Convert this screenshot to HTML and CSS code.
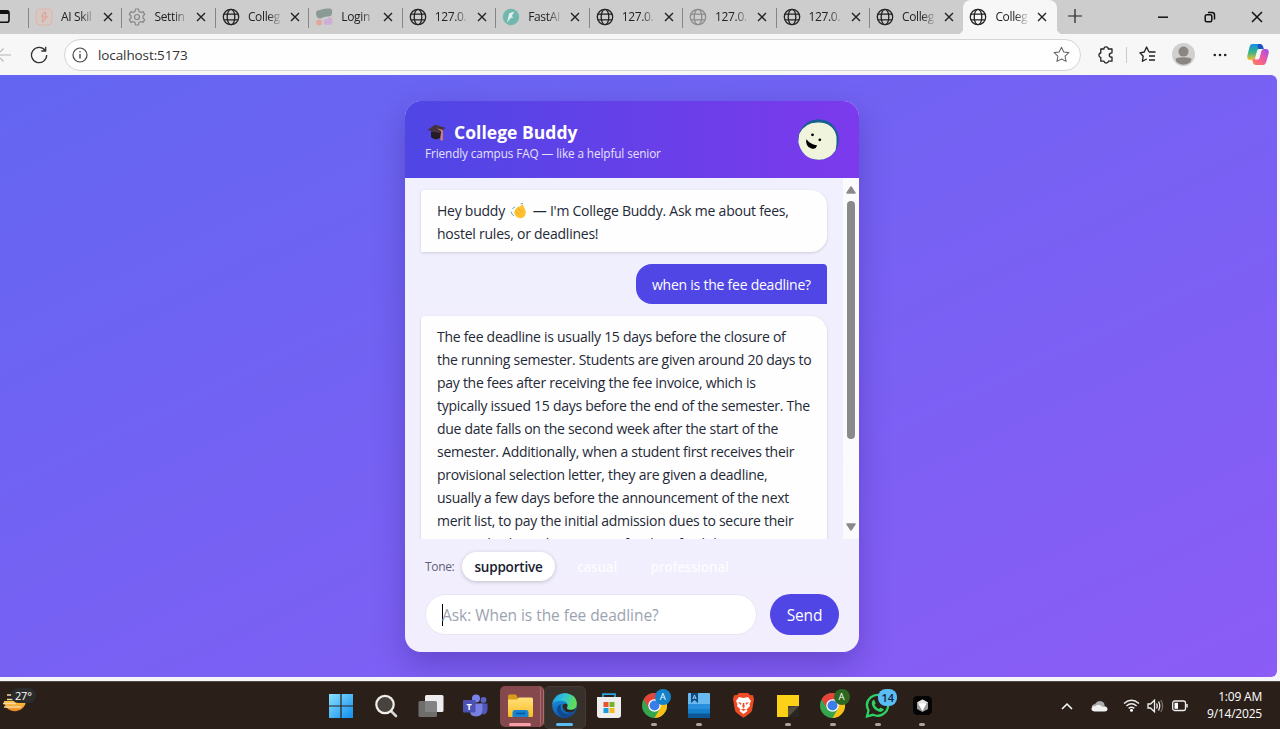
FILE: index.html
```
<!DOCTYPE html>
<html lang="en">
<head>
<meta charset="utf-8">
<title>College Buddy</title>
<link rel="stylesheet" href="styles.css">
</head>
<body>
<svg class="defs" width="0" height="0">
  <defs>
    <linearGradient id="win" x1="0" y1="0" x2="1" y2="1"><stop offset="0" stop-color="#8be1fc"/><stop offset="1" stop-color="#0f8df0"/></linearGradient>
    <linearGradient id="folder" x1="0" y1="0" x2="0" y2="1"><stop offset="0" stop-color="#ffe07a"/><stop offset="1" stop-color="#f9bd25"/></linearGradient>
    <linearGradient id="edgeA" x1="0" y1="0" x2="1" y2="0.3"><stop offset="0" stop-color="#1c9ae0"/><stop offset=".5" stop-color="#2fc3d8"/><stop offset="1" stop-color="#5fdc58"/></linearGradient>
    <linearGradient id="edgeB" x1="0" y1="0" x2="0" y2="1"><stop offset="0" stop-color="#1b9de4"/><stop offset="1" stop-color="#0f58b0"/></linearGradient>
    <linearGradient id="cpA" x1="0" y1="0" x2="0" y2="1"><stop offset="0" stop-color="#178de8"/><stop offset=".5" stop-color="#32b58b"/><stop offset="1" stop-color="#f4c02c"/></linearGradient>
    <linearGradient id="cpB" x1="1" y1="0" x2="0" y2="1"><stop offset="0" stop-color="#a04df0"/><stop offset=".5" stop-color="#ee5aa0"/><stop offset="1" stop-color="#ff8050"/></linearGradient>
    <linearGradient id="sun" x1="0" y1="0" x2="0" y2="1"><stop offset="0" stop-color="#ffc63b"/><stop offset="1" stop-color="#ee8524"/></linearGradient>
    <symbol id="globe" viewBox="0 0 18 18"><g fill="none" stroke="currentColor" stroke-width="1.3"><circle cx="9" cy="9" r="7.7"/><ellipse cx="9" cy="9" rx="3.8" ry="7.7"/><path d="M2 6.2h14M2 11.8h14"/></g></symbol>
    <symbol id="close" viewBox="0 0 10 10"><path d="M1 1l8 8M9 1L1 9" stroke="currentColor" stroke-width="1.4"/></symbol>
    <symbol id="chrome" viewBox="0 0 24 24">
      <circle cx="12" cy="12" r="12" fill="#35a64d"/>
      <path d="M1.6 6A12 12 0 0 1 22.4 6H12L7 15z" fill="#e6443a"/>
      <path d="M22.4 6A12 12 0 0 1 12 24l5.2-9L12 6z" fill="#fbc116"/>
      <circle cx="12" cy="12" r="6" fill="#fff"/><circle cx="12" cy="12" r="4.8" fill="#3b7de9"/>
    </symbol>
  </defs>
</svg>

<div class="tabs">
  <div class="lead"><svg width="10" height="15" viewBox="0 0 10 15"><path d="M-4 1.7H7Q9 1.7 9 4V11Q9 13.3 7 13.3H-4" fill="none" stroke="#111" stroke-width="1.6"/><path d="M-4 3.5H9" stroke="#111" stroke-width="3"/></svg></div>
  <div class="tab"><svg class="fav" viewBox="0 0 18 18"><rect x="1" y="1" width="16" height="16" rx="4" fill="#d6c9c5" stroke="#dfb5a8"/><path d="M10.500 3.500L6.500 8 9 9.500 12 8.500 7.500 14.500M10.500 3.500V8.500M7.500 9v5.500" fill="none" stroke="#e2a596" stroke-width="1.200"/></svg><span class="name">AI Skil</span><svg class="x"><use href="#close"/></svg></div>
  <div class="tab"><svg class="fav" viewBox="0 0 18 18" fill="none" stroke="#858585" stroke-width="1.2" stroke-linejoin="round"><path d="M7.500 1h3l.5 2.500 1.800 1L15 3.600l1.700 2.800L15 8v2l1.700 1.600-1.700 2.800-2.200-.9-1.800 1-.5 2.500h-3L7 14.500l-1.800-1-2.200.9-1.700-2.800L3 10V8L1.300 6.400 3 3.600l2.200.9 1.800-1z"/><circle cx="9" cy="9" r="2.500"/></svg><span class="name">Settin</span><svg class="x"><use href="#close"/></svg></div>
  <div class="tab"><svg class="fav"><use href="#globe"/></svg><span class="name">Colleg</span><svg class="x"><use href="#close"/></svg></div>
  <div class="tab"><svg class="fav" viewBox="0 0 18 18"><path d="M1 5Q1 2 5 2Q8 0 15 .5Q18 1 17 5Q17 9 12 8.500Q8 9 6 10.500Q1 11 1 5z" fill="#8c9a95"/><circle cx="4" cy="14.500" r="2.900" fill="#e3a79b"/><path d="M8.500 14Q8.500 11 12 11Q13 9.500 15.500 9.500Q17.500 10 17.500 13.500Q17.500 17 13 17Q8.500 17.500 8.500 14z" fill="#cfaed6"/></svg><span class="name">Login</span><svg class="x"><use href="#close"/></svg></div>
  <div class="tab"><svg class="fav"><use href="#globe"/></svg><span class="name">127.0.</span><svg class="x"><use href="#close"/></svg></div>
  <div class="tab"><svg class="fav" viewBox="0 0 18 18"><circle cx="9" cy="9" r="8.200" fill="#70b8ad"/><path d="M12.500 3.500L7.300 5.300 5 14.500l4-4.700h2.500L9.700 8z" fill="#e4eeee"/></svg><span class="name">FastAI</span><svg class="x"><use href="#close"/></svg></div>
  <div class="tab"><svg class="fav"><use href="#globe"/></svg><span class="name">127.0.</span><svg class="x"><use href="#close"/></svg></div>
  <div class="tab"><svg class="fav faded"><use href="#globe"/></svg><span class="name">127.0.</span><svg class="x"><use href="#close"/></svg></div>
  <div class="tab"><svg class="fav"><use href="#globe"/></svg><span class="name">127.0.</span><svg class="x"><use href="#close"/></svg></div>
  <div class="tab"><svg class="fav"><use href="#globe"/></svg><span class="name">Colleg</span><svg class="x"><use href="#close"/></svg></div>
  <div class="tab active"><svg class="fav"><use href="#globe"/></svg><span class="name">Colleg</span><svg class="x"><use href="#close"/></svg></div>
  <svg class="plus" width="14" height="14" viewBox="0 0 14 14"><path d="M7 0v14M0 7h14" stroke="#222" stroke-width="1.200"/></svg>
  <div class="wincontrols">
    <svg width="12" height="12" viewBox="0 0 12 12"><path d="M1 6.200h10" stroke="#111" stroke-width="1.500"/></svg>
    <svg width="12" height="12" viewBox="0 0 12 12" fill="none" stroke="#111" stroke-width="1.500"><rect x="1.200" y="3.800" width="6.600" height="7" rx="1.500"/><path d="M4 1.500H8Q10.500 1.500 10.500 4V8.500"/></svg>
    <svg width="12" height="12" viewBox="0 0 12 12"><path d="M1 1l10 10M11 1L1 11" stroke="#111" stroke-width="1.500"/></svg>
  </div>
</div>

<div class="toolbar">
  <svg class="back" width="12" height="16" viewBox="0 0 12 16"><path d="M-4 8H11M3.500 1.500L-3 8l6.500 6.500" fill="none" stroke="#b5b5b5" stroke-width="1.200"/></svg>
  <svg class="reload" width="18" height="18" viewBox="0 0 18 18"><path d="M15.200 4.500A7.600 7.600 0 1 0 16.700 9M15.700.8V5H11.300" fill="none" stroke="#333" stroke-width="1.300"/></svg>
  <div class="address">
    <svg width="16" height="16" viewBox="0 0 16 16"><circle cx="8" cy="8" r="7" fill="none" stroke="#444" stroke-width="1.200"/><path d="M8 7v4.500M8 4.200v1.300" stroke="#333" stroke-width="1.300"/></svg>
    <span class="url">localhost:5173</span>
    <svg width="17" height="17" viewBox="0 0 18 18"><path d="M9 1.300l2.400 5 5.400.7-4 3.800 1 5.500L9 13.700l-4.800 2.600 1-5.500-4-3.800 5.400-.7z" fill="none" stroke="#666" stroke-width="1.100" stroke-linejoin="round"/></svg>
  </div>
  <div class="tools">
    <svg width="16" height="18" viewBox="0 0 16 18"><path d="M2.800 3H6Q5.800.9 8 .9T10.200 3H14V6.800Q11.300 6.800 11.300 9T14 11.200V15.200H10.400Q10.200 17 8.200 17T6 15.200H2.800V11.500Q.9 11.200.9 9.200T2.800 7z" fill="none" stroke="#222" stroke-width="1.300" stroke-linejoin="round"/></svg>
    <i class="rule"></i>
    <svg width="18" height="17" viewBox="0 0 18 17"><path d="M10 6L7.600 1 5.300 6 .9 6.800 4.200 10.200 3.400 15.300 7.700 13M10 6h6.500M10 10h6M10 14h6" fill="none" stroke="#222" stroke-width="1.300" stroke-linejoin="round"/></svg>
    <svg width="23" height="23" viewBox="0 0 23 23"><circle cx="11.500" cy="11.500" r="11.500" fill="#d2d0ce"/><circle cx="11.500" cy="8.600" r="5" fill="#8a8684"/><path d="M3.500 15.500Q11.500 13 19.500 15.500Q19.500 21 11.500 21.800Q3.500 21 3.500 15.500z" fill="#8a8684"/></svg>
    <svg width="14" height="4" viewBox="0 0 14 4"><g fill="#222"><circle cx="1.800" cy="2" r="1.300"/><circle cx="7" cy="2" r="1.300"/><circle cx="12.200" cy="2" r="1.300"/></g></svg>
    <svg width="22" height="21" viewBox="0 0 22 21"><path d="M5 0H13Q15.300 0 16 2.500L16.600 5H12Q10.500 5 10 7L8.300 13Q7.500 16 5 16H3Q-.5 16 .5 11L2.500 3Q3.200 0 5 0z" fill="url(#cpA)"/><path d="M11 0H13Q15.300 0 16 2.500L16.600 5H12Q10 4.500 11 0z" fill="#1c51c9"/><path d="M16.800 5H19Q22.500 5 21.500 10L19.500 17Q18.500 21 16 21H9Q6.500 21 5.800 18L5.300 16Q7.700 15.500 8.300 13L8 15.500H11Q12.200 15.500 12.700 13.500L14.200 7.500Q14.800 5 16.800 5z" fill="url(#cpB)"/></svg>
  </div>
</div>

<main class="viewport">
  <section class="card">
    <header class="head">
      <div>
        <h1><svg width="19" height="17" viewBox="0 0 19 17"><path d="M4 7.500v5.500q4 4 9 1l1-6z" fill="#241c25"/><path d="M.5 6L8 .8 18.500 3.800 12.500 9.300z" fill="#45333f"/><path d="M10 4.200L15.800 6V16.500L13.300 16.200 14.300 7.200z" fill="#e08264"/></svg>College Buddy</h1>
        <p>Friendly campus FAQ — like a helpful senior</p>
      </div>
      <svg class="avatar" width="41" height="41" viewBox="0 0 41 41"><circle cx="20.500" cy="20.500" r="20.300" fill="#175e92"/><path d="M1.200 15Q7 3 20.500 3.500Q36 4 38.500 18Q39 26 37.500 31.500Q31 41 20.500 40.800Q4 40 .3 23z" fill="#f0f4dd"/><circle cx="14.500" cy="15.800" r="1.400"/><circle cx="21.800" cy="20.800" r="1.400"/><path d="M8.300 20.200Q13 25.800 19 26.300Q18 31 13.300 29.500Q7 27 8.300 20.200z"/></svg>
    </header>
    <div class="chat">
      <div class="messages">
        <div class="bubble bot hello">Hey buddy <svg class="wave" width="17" height="16" viewBox="0 0 17 16"><path d="M4.500 7.500L7.500 4 10 3.500 12.500 1 14 4.500 15.800 8Q16 15 10.500 15.200Q7 15 4.500 11.500z" fill="#ffc12f"/><path d="M5.500 8l3.500 3.500M8 5.500l3.500 3.500" stroke="#e79b22" stroke-width=".8"/><path d="M1 8.500q.5 3 3 4.500M2.500 6Q3 4.500 5 4M10.500 1q1-.8 2.500-.3" fill="none" stroke="#68a9c2" stroke-width="1"/></svg> — I'm College Buddy. Ask me about fees,<br>hostel rules, or deadlines!</div>
        <div class="bubble user">when is the fee deadline?</div>
        <div class="bubble bot">The fee deadline is usually 15 days before the closure of<br>the running semester. Students are given around 20 days to<br>pay the fees after receiving the fee invoice, which is<br>typically issued 15 days before the end of the semester. The<br>due date falls on the second week after the start of the<br>semester. Additionally, when a student first receives their<br>provisional selection letter, they are given a deadline,<br>usually a few days before the announcement of the next<br>merit list, to pay the initial admission dues to secure their<br>seat and submit the payment for their final dues.</div>
      </div>
      <div class="scroll"><svg width="10" height="8" viewBox="0 0 10 8"><path d="M5 1L9 7H1z" fill="#8a8a8a" stroke="#8a8a8a" stroke-width="1.500" stroke-linejoin="round"/></svg><i></i><svg class="down" width="10" height="8" viewBox="0 0 10 8"><path d="M5 7L9 1H1z" fill="#8a8a8a" stroke="#8a8a8a" stroke-width="1.500" stroke-linejoin="round"/></svg></div>
    </div>
    <div class="tone"><span class="label">Tone:</span><button class="pill on">supportive</button><button class="pill casual">casual</button><button class="pill pro">professional</button></div>
    <div class="ask"><div class="field"><i class="caret"></i><span>Ask: When is the fee deadline?</span></div><button class="send">Send</button></div>
  </section>
</main>

<footer class="taskbar">
  <div class="weather"><svg width="30" height="30" viewBox="0 0 30 30"><path d="M4 13H26A11.200 11.200 0 0 1 4 15z" fill="url(#sun)"/><path d="M7 7h5M7 11.500h9M3 15.500h13M4 19h17" stroke="#f3d9a4" stroke-width="1.700"/></svg><span>27°</span></div>
  <div class="apps">
    <div class="app"><svg width="24" height="24" viewBox="0 0 24 24"><path d="M0 0h11.400v11.400H0zM12.600 0H24v11.400H12.600zM0 12.600h11.400V24H0zM12.600 12.600H24V24H12.600z" fill="url(#win)"/></svg></div>
    <div class="app"><svg width="24" height="24" viewBox="0 0 24 24"><path d="M17 17l5 5" stroke="#d5d5d5" stroke-width="2.600" stroke-linecap="round"/><circle cx="11" cy="10.500" r="8.700" fill="#49433d" stroke="#eeeeec" stroke-width="2.200"/></svg></div>
    <div class="app"><svg width="26" height="24" viewBox="0 0 26 24"><rect x="7" y="1" width="18.500" height="17" rx="1.500" fill="#ededed"/><rect x=".5" y="7" width="18.500" height="16" rx="1.500" fill="#777" opacity=".9"/></svg></div>
    <div class="app"><svg width="25" height="24" viewBox="0 0 25 24"><circle cx="20.500" cy="6" r="2.900" fill="#5b62c5"/><path d="M17 9.500h7.500V16q-.5 4.500-5 4.500z" fill="#5057b8"/><circle cx="13" cy="4.500" r="4" fill="#7a83eb"/><path d="M7 9.500h12.500V16q0 6.500-6.500 6.500T7 16z" fill="#7880e2"/><rect y="6" width="12.500" height="12.500" rx="1" fill="#4b52b3"/><text x="6.200" y="15.500" text-anchor="middle" class="tlogo">T</text></svg></div>
    <div class="app files"><svg width="25" height="23" viewBox="0 0 25 23"><path d="M0 2Q0 .5 1.500.5H8l2 3.500H24v8H0z" fill="#d99b1a"/><path d="M0 5.500H9L11 3.500H23.500Q25 3.500 25 5V21.500Q25 23 23.500 23H1.500Q0 23 0 21.500z" fill="url(#folder)"/><path d="M4.500 23V18.500Q4.500 16 7 16H18Q20.500 16 20.500 18.500V23z" fill="#1784d3"/><path d="M8 19.500h9" stroke="#0c5696" stroke-width="1.600"/></svg></div>
    <div class="app edge"><svg width="25" height="25" viewBox="0 0 25 25"><circle cx="12.500" cy="12.500" r="12.300" fill="url(#edgeB)"/><path d="M.4 11Q2 1 12.500.2Q24.800 1 24.800 11Q24.500 16.800 18.500 16.800Q14 16.500 15 14.500Q17 9 11 8Q4 7 .4 11z" fill="url(#edgeA)"/><path d="M9 11Q7 18 13 20.500Q18 22 23.500 18Q19 24.700 12.500 24.800Q5 23 5 16Q5.500 12 9 11z" fill="#114a8c"/><path d="M10.500 12Q12 10 15 11Q16.300 13 14.800 15Q15.500 17 19 17Q22 17 24 15.300Q23 19 18 19.600Q10 19 10.500 12z" fill="#2c2722"/></svg></div>
    <div class="app"><svg width="24" height="25" viewBox="0 0 24 25"><path d="M6 5V1.200H18V5" fill="none" stroke="#2ba7e0" stroke-width="1.700"/><path d="M0 4H24V22Q24 25 21 25H3Q0 25 0 22z" fill="#eee"/><path d="M6.500 9h5v5h-5z" fill="#e9532c"/><path d="M12.500 9h5v5h-5z" fill="#77b32a"/><path d="M6.500 15h5v5h-5z" fill="#1c9ae0"/><path d="M12.500 15h5v5h-5z" fill="#fab71b"/></svg></div>
    <div class="app open"><svg width="25" height="25"><use href="#chrome"/></svg><b class="badge blue">A</b></div>
    <div class="app open"><svg width="22" height="25" viewBox="0 0 22 25"><rect width="22" height="25" rx="1.500" fill="#1680ca"/><path d="M0 1Q0 0 1 0H21Q22 0 22 1V11H0z" fill="#69b9f1"/><path d="M0 11h22v5H0z" fill="#298fdd"/><path d="M0 20.500h22V25H0z" fill="#0c5899"/><path d="M3 0h7v10L6.500 7 3 10z" fill="#0e4c80"/><path d="M4.800 6L6.500 2 8.200 6M5.300 5h2.400" fill="none" stroke="#bfe2fa" stroke-width=".8"/></svg></div>
    <div class="app"><svg width="21" height="25" viewBox="0 0 21 25"><path d="M6 0h9l2 2 3 .3L21 6 19 17.500Q18 20 10.500 24.800Q3 20 2 17.500L0 6 1 2.300 4 2z" fill="#f04a24"/><path d="M6 4l4.500 1L15 4l3 4-1.500 3 .5 2-3.500 3.500 1 1.500L10.500 21 6.500 18l1-1.500L4 13l.5-2L3 8z" fill="#fff"/><path d="M5 9l3.500 1-1 2zM16 9l-3.500 1 1 2zM9.800 10h1.400l.5 4-1.200 1-1.200-1zM8 16.500l2.500-1 2.500 1-2.500 1.500z" fill="#f04a24"/></svg></div>
    <div class="app open"><svg width="22" height="22" viewBox="0 0 22 22"><path d="M0 0H22V11L11 22H0z" fill="#fcd116"/><path d="M11 11H22V22H11z" fill="#3f3b31"/><path d="M11 22L22 11V22z" fill="#292723"/><path d="M11 22V13Q14 12 22 11z" fill="#55503c"/></svg></div>
    <div class="app open"><svg width="25" height="25"><use href="#chrome"/></svg><b class="badge green">A</b></div>
    <div class="app open"><svg width="25" height="25" viewBox="0 0 25 25"><path d="M2 23.300L3.500 17.500Q-.5 10 5.500 4.500Q12 -.5 19 4Q26 10 21.500 18Q15.500 25 8 21.800z" fill="none" stroke="#2bd366" stroke-width="2.300"/><path d="M9 6.500l1.700 3.800L9.500 12Q11.500 15 14 16l1.700-1.500L19 16.500Q17 20 13.500 18.500Q8.500 16.500 7 12Q6 8 9 6.500z" fill="#2bd366"/></svg><b class="badge count">14</b></div>
    <div class="app open"><svg width="19" height="19" viewBox="0 0 19 19"><rect width="19" height="19" rx="4.500" fill="#050505"/><path d="M9.500 3.500L15 6.500V13L9.500 16 4 13V6.500z" fill="#9b9b9b"/><path d="M4 6.500L9.500 3.500 15 6.500 9.500 9z" fill="#e4e4e4"/><path d="M5 7.500L13.500 7.500 9.500 15z" fill="#fff"/></svg></div>
  </div>
  <div class="tray">
    <svg width="12" height="8" viewBox="0 0 12 8"><path d="M1 7l5-5 5 5" fill="none" stroke="#fff" stroke-width="1.500"/></svg>
    <svg class="cloud" width="17" height="12" viewBox="0 0 17 12"><path d="M2 10Q-1 5 4 4Q7 -1 12 2Q14 4 13.500 6z" fill="#aaa"/><path d="M3.500 11.500Q0 11 .5 8Q2 5.500 4.500 6Q8 3.500 11 6.500Q16 5.500 16.500 9Q16.500 11.500 13.500 11.500z" fill="#f0f0f0"/></svg>
    <svg class="wifi" width="17" height="13" viewBox="0 0 17 13"><g fill="none" stroke="#eee" stroke-width="1.400"><path d="M1 4.500Q8.500 -2 16 4.500M3.400 7Q8.500 2.500 13.600 7M5.700 9.400Q8.500 7 11.300 9.400"/></g><circle cx="8.500" cy="11.300" r="1.500" fill="#fff"/></svg>
    <svg class="vol" width="17" height="14" viewBox="0 0 17 14"><g fill="none" stroke="#eee" stroke-width="1.300"><path d="M1 5H3.500L7.500 1.200V12.800L3.500 9H1zM9.500 4.500Q11 7 9.500 9.500M11.500 2.500Q14 7 11.500 11.500"/><path d="M13.800 1Q17.500 7 13.800 13" stroke="#776f68"/></g></svg>
    <svg class="bat" width="16" height="12" viewBox="0 0 16 12"><rect x=".7" y="1" width="12.800" height="9.500" rx="2" fill="none" stroke="#eee" stroke-width="1.300"/><path d="M2.500 2.800h3.500v6H2.500z" fill="#fff"/><path d="M15 4v3.500" stroke="#eee" stroke-width="1.500"/></svg>
    <div class="clock">1:09 AM<br>9/14/2025</div>
  </div>
</footer>
</body>
</html>
```
FILE: styles.css
```
* { box-sizing: border-box; }
body { margin: 0; width: 1280px; height: 729px; overflow: hidden; background: #f6f5f9; font-family: "Open Sans", "Noto Sans", sans-serif; display: flex; flex-direction: column; color: #222; }
svg { display: block; flex: none; }
.defs { position: absolute; }
button { border: 0; font: inherit; padding: 0; flex: none; }

.tabs { height: 34px; flex: none; background: #cdcdcd; display: flex; }
.lead { width: 29px; flex: none; padding-top: 9px; }
.tab { width: 93.450px; flex: none; height: 33px; display: flex; align-items: center; padding-left: 6px; position: relative; }
.tab::before { content: ""; position: absolute; left: -1px; top: 8px; width: 1px; height: 20px; background: #858585; }
.fav { width: 18px; height: 18px; color: #222; }
.fav.faded { color: #8b8b8b; }
.name { width: 36px; margin-left: 8px; white-space: nowrap; font-size: 12px; letter-spacing: -.35px; line-height: 17px; mask-image: linear-gradient(90deg, #000 55%, transparent 96%); }
.x { width: 10px; height: 10px; margin-left: 6px; color: #222; flex: none; }
.tab.active { background: #f7f7f7; height: 34px; border-radius: 8px 8px 0 0; padding-bottom: 1px; }
.tab.active::before { left: -6px; top: auto; bottom: 0; width: 6px; height: 6px; background: radial-gradient(circle at 0 0, transparent 6px, #f7f7f7 6.500px); }
.tab.active::after { content: ""; position: absolute; right: -6px; bottom: 0; width: 6px; height: 6px; background: radial-gradient(circle at 100% 0, transparent 6px, #f7f7f7 6.500px); }
.plus { margin: 9px 0 0 11px; }
.wincontrols { display: flex; gap: 35px; margin: 11px 17px 0 auto; }

.toolbar { height: 41px; flex: none; background: #f7f7f7; display: flex; align-items: center; }
.reload { margin-left: 18px; }
.address { width: 1017px; height: 32px; margin-left: 16px; border: 1px solid #d5d5d5; border-radius: 16px; background: #fefefe; display: flex; align-items: center; padding: 0 10px 0 7px; flex: none; }
.url { font-size: 13.500px; letter-spacing: -.1px; margin-left: 10px; flex: 1; color: #333; }
.tools { display: flex; align-items: center; flex: none; }
.tools svg:nth-of-type(1) { margin-left: 17px; }
.rule { width: 1px; height: 16px; background: #cacaca; margin: 0 12px; }
.tools svg:nth-of-type(3) { margin-left: 15px; }
.tools svg:nth-of-type(4) { margin-left: 18px; }
.tools svg:nth-of-type(5) { margin-left: 20px; }

.viewport { width: 1277px; height: 602px; flex: none; margin-bottom: 4px; padding: 26px 0 0 405px; background: linear-gradient(to bottom right, #6366f1, #8b5cf6); border-radius: 0 6px 6px 0; overflow: hidden; }
.card { width: 454px; height: 551px; border-radius: 16px; overflow: hidden; background: linear-gradient(180deg, #f0f0fe, #f2eefe); box-shadow: 0 12px 30px rgba(49,25,130,.34); }
.head { height: 77px; padding: 18px 20px 0; display: flex; justify-content: space-between; background: linear-gradient(90deg, #4f46e5, #7c3aed); color: #fff; }
.head h1 { margin: 0; font-size: 17.500px; font-weight: 700; line-height: 27px; letter-spacing: .03px; display: flex; align-items: center; gap: 8px; padding-left: 2px; }
.head p { margin: -1px 0 0; font-size: 11.800px; line-height: 17px; letter-spacing: -.12px; color: #e5e1fc; white-space: nowrap; }
.chat { height: 361px; display: flex; overflow: hidden; }
.messages { width: 438px; padding: 12px 16px 0; display: flex; flex-direction: column; gap: 12px; }
.bubble { font-size: 14px; line-height: 23.040px; letter-spacing: -.28px; white-space: nowrap; flex: none; padding: 9px 16px 7px; color: #1f2937; }
.bot { width: 406px; background: #fefefe; border-radius: 4px 16px 16px 0; box-shadow: 0 1px 3px rgba(0,0,0,.15); }
.hello { height: 62px; letter-spacing: -.24px; }
.wave { display: inline-block; vertical-align: -3px; margin: 0 2px 0 2px; }
.user { align-self: flex-end; width: 191px; height: 40px; letter-spacing: -.24px; background: #4f46e5; color: #fff; border-radius: 16px 4px 0 16px; }
.scroll { width: 16px; background: #fbfbfd; display: flex; flex-direction: column; align-items: center; padding: 8px 0; }
.scroll i { width: 8px; height: 238px; margin-top: 7px; border-radius: 4px; background: #8a8a8a; }
.scroll .down { margin-top: auto; }
.tone { height: 55px; display: flex; align-items: center; padding: 0 20px; }
.label { font-size: 12px; letter-spacing: -.35px; width: 37px; color: #5d6275; }
.pill { height: 29px; border-radius: 15px; font-size: 13.500px; font-weight: 600; letter-spacing: -.2px; background: transparent; color: #fdfcff; }
.pill.on { width: 93px; background: #fff; color: #18202e; box-shadow: 0 1px 4px rgba(0,0,0,.2); }
.pill.casual { width: 64px; margin-left: 10px; }
.pill.pro { width: 103px; margin-left: 9px; }
.ask { display: flex; padding-left: 20px; }
.field { width: 332px; height: 41px; border-radius: 21px; background: #fff; border: 1px solid #e8e5f2; display: flex; align-items: center; padding-left: 16px; font-size: 15.500px; letter-spacing: -.05px; color: #9ca3af; white-space: nowrap; }
.caret { width: 1px; height: 22px; margin-right: -1px; background: #000; }
.send { width: 69px; height: 41px; margin-left: 13px; border-radius: 21px; background: #4f46e5; color: #fff; font-size: 15.500px; letter-spacing: -.2px; }

.taskbar { height: 48px; flex: none; background: #2b2019; border-top: 1px solid #504b45; display: flex; color: #fff; position: relative; }
.weather { width: 319px; flex: none; position: relative; padding-top: 5px; }
.weather svg { margin-top: 1px; }
.weather span { position: absolute; left: 11px; top: 6px; background: #2c2c2d; border-radius: 8px; font-size: 11px; line-height: 15px; padding: 0 4px; letter-spacing: -.2px; }
.apps { display: grid; grid-template-columns: repeat(14, 44.700px); height: 47px; flex: none; }
.app { display: flex; align-items: center; justify-content: center; position: relative; }
.app svg { position: relative; }
.open::after, .files::after, .edge::after { content: ""; position: absolute; bottom: 3px; width: 6px; height: 3px; border-radius: 2px; background: #aaa49e; }
.files::before, .edge::before { content: ""; position: absolute; left: 2px; top: 4px; width: 40px; height: 41px; border-radius: 5px; background: #84484d; border-right: 4px double #a96c70; }
.edge::before { background: #38302a; border: 1px solid #443b35; }
.files::after { width: 22px; background: #f7a0a7; }
.edge::after { width: 17px; background: #5cbcf0; }
.badge { position: absolute; left: 23px; top: 7px; width: 16px; height: 16px; border-radius: 8px; text-align: center; font-size: 9.500px; line-height: 16px; font-weight: 400; }
.blue { background: #1482c8; }
.green { background: #2d6722; }
.count { background: #5abdf6; color: #102537; width: 19px; height: 17px; font-size: 11px; line-height: 17px; font-weight: 600; }
.tlogo { font: 700 9px "Open Sans", sans-serif; fill: #fff; }
.tray { flex: 1; display: flex; align-items: center; padding-left: 116px; }
.cloud { margin-left: 18px; }
.wifi { margin-left: 15px; }
.vol { margin-left: 7px; }
.bat { margin-left: 8px; }
.clock { margin: 0 18px 0 auto; font-size: 12px; line-height: 16.500px; text-align: right; letter-spacing: -.2px; }
```
